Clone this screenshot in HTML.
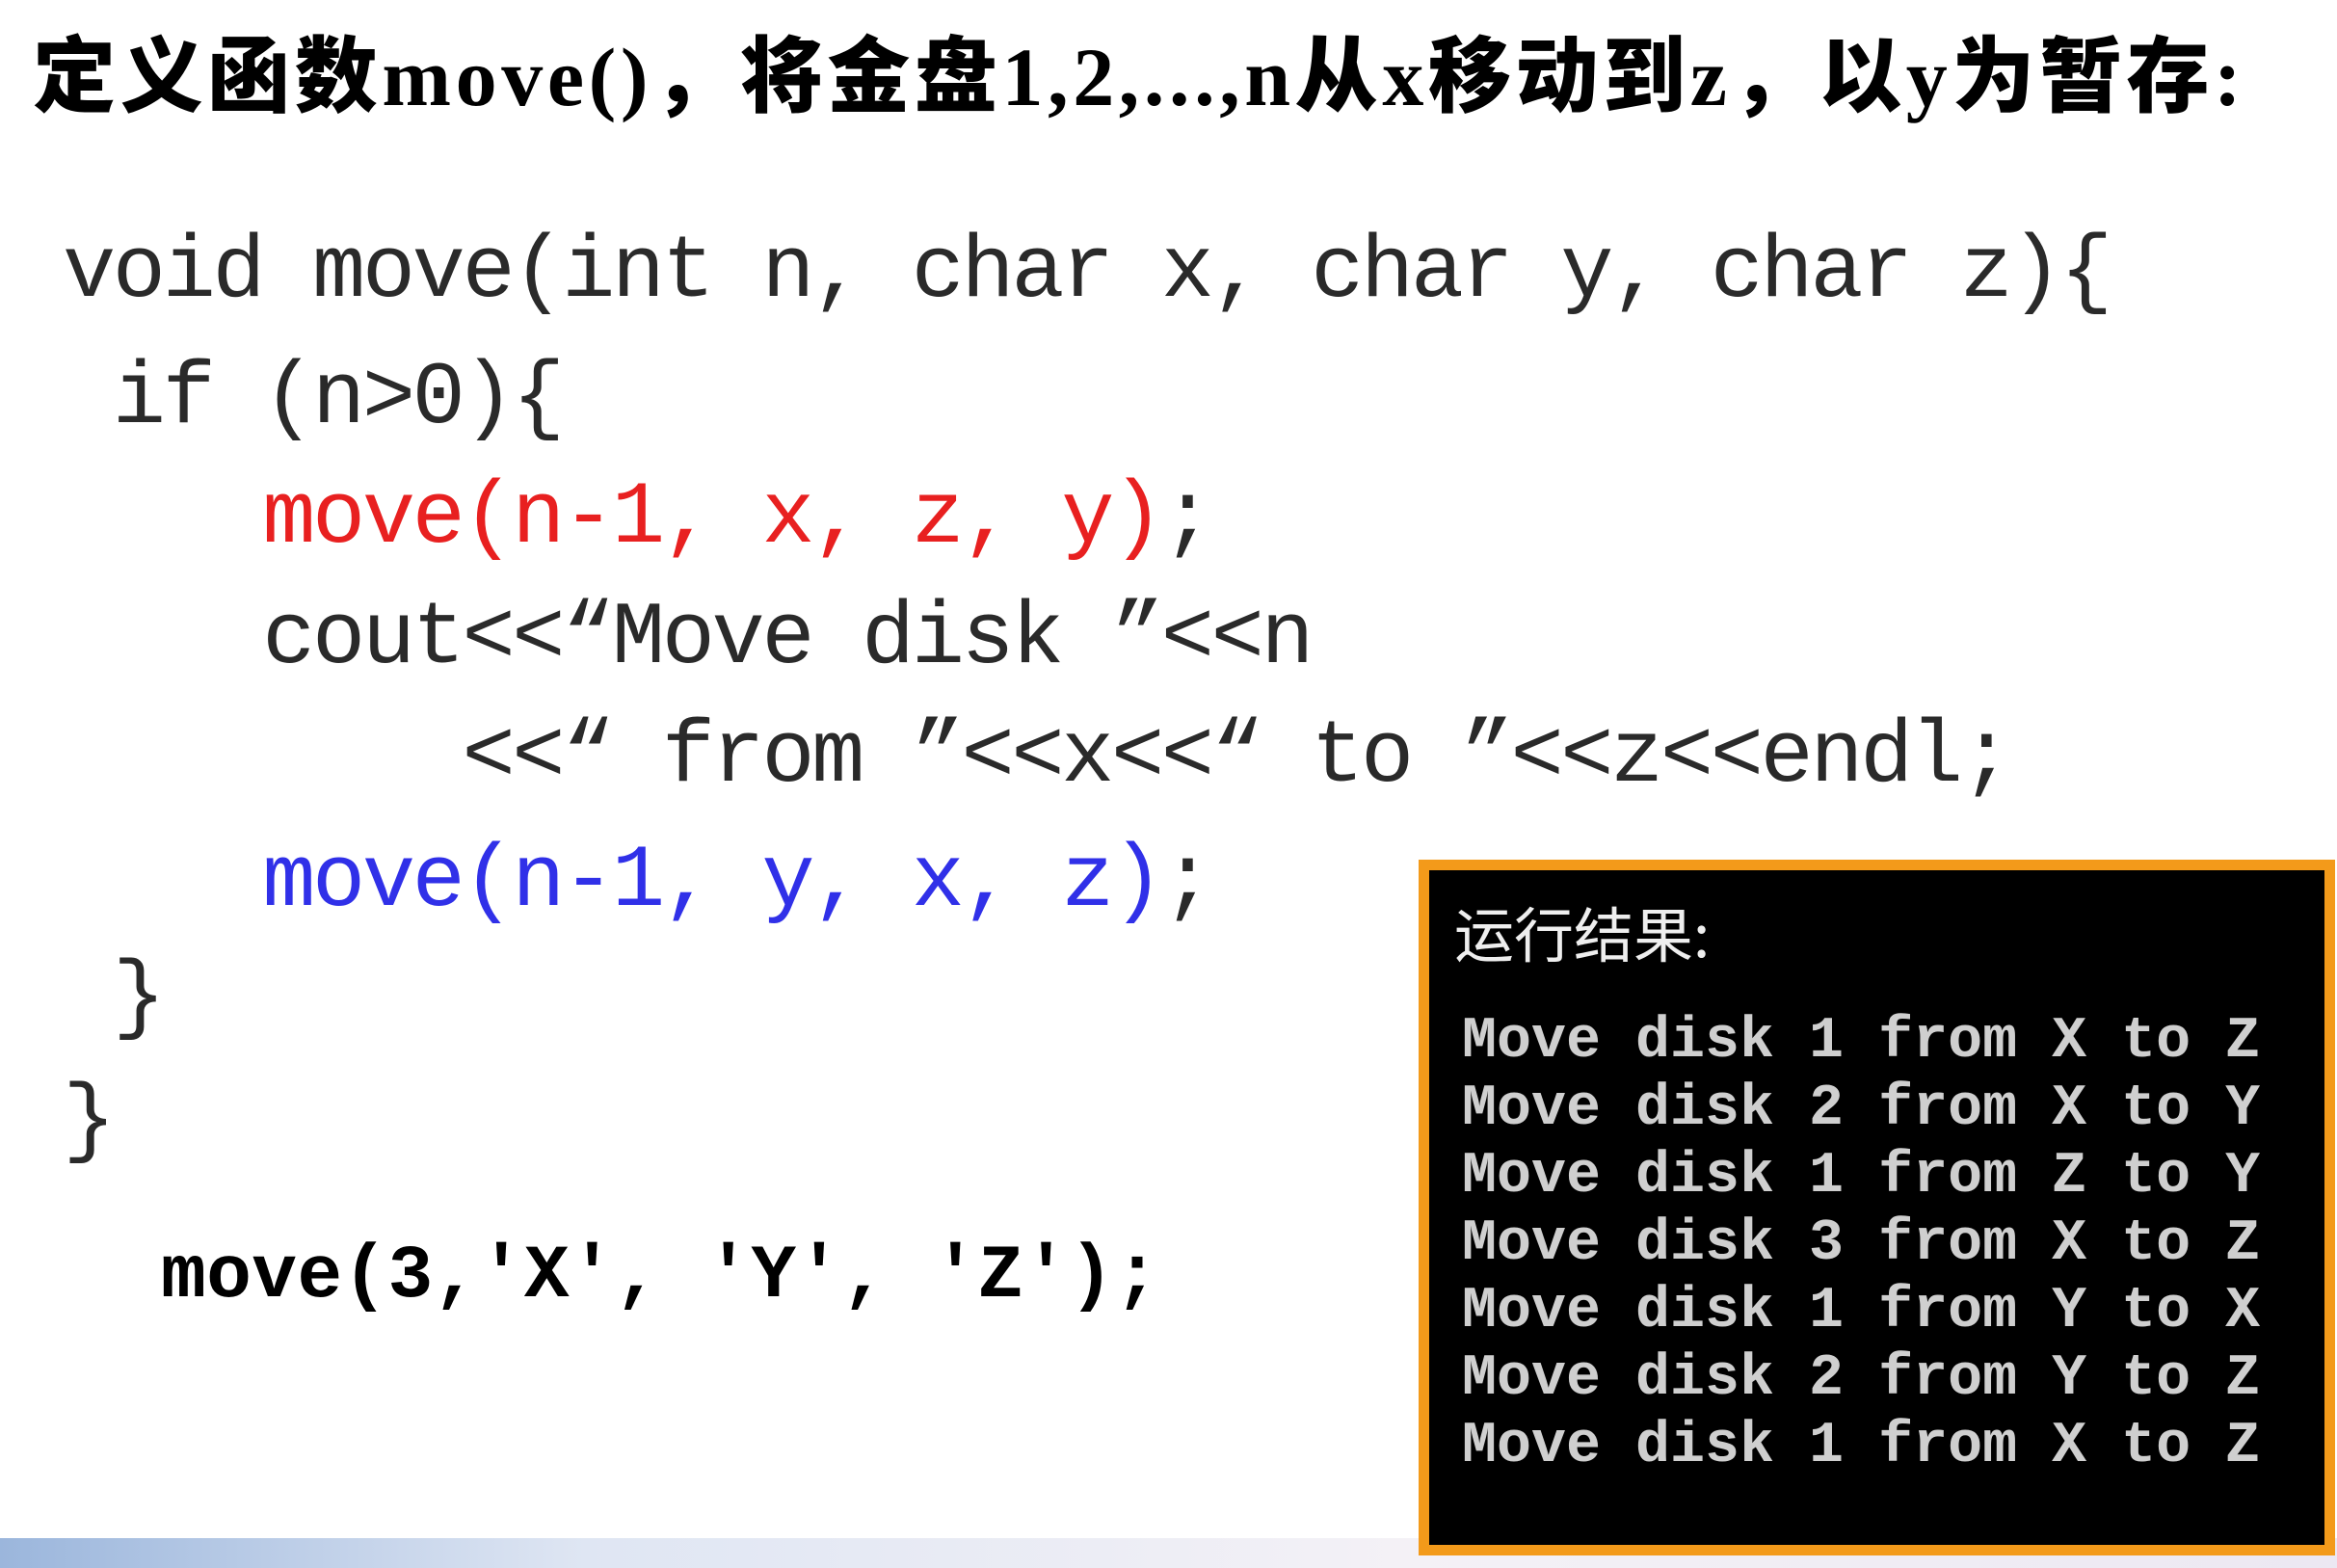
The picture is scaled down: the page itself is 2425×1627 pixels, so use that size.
<!DOCTYPE html>
<html><head><meta charset="utf-8"><style>
html,body{margin:0;padding:0;}
body{width:2425px;height:1627px;position:relative;overflow:hidden;background:#fff;}
.t{position:absolute;left:34px;top:22px;font-family:"Liberation Serif","Noto Sans CJK SC",serif;font-weight:bold;font-size:86px;line-height:100px;white-space:nowrap;color:#000;letter-spacing:4.6px;}
.t .c{font-family:"Noto Sans CJK SC",sans-serif;font-weight:900;}
.l{position:absolute;font-family:"Liberation Mono",monospace;font-size:92px;line-height:92px;letter-spacing:-3.4px;white-space:pre;color:#2a2a2a;left:65px;}
.r{color:#e82020;}.b{color:#3030e8;}
.bd{position:absolute;left:167px;top:1286px;font-family:"Liberation Mono",monospace;font-weight:bold;font-size:78px;line-height:78px;white-space:pre;color:#000;letter-spacing:0.3px;}
.term{position:absolute;left:1472px;top:892px;width:929px;height:700px;background:#000;border:11px solid #f39a1a;}
.th{position:absolute;left:26px;top:28px;font-family:"Noto Sans CJK SC",sans-serif;font-size:62px;line-height:70px;color:#eee;}
.tl{position:absolute;left:34px;font-family:"Liberation Mono",monospace;font-weight:bold;font-size:60px;line-height:70px;color:#cfcfcf;white-space:pre;}
.bot{position:absolute;left:0;top:1596px;width:2425px;height:31px;background:linear-gradient(90deg,#9bb6dc 0%,#dfe6f3 25%,#f4f1f6 60%,#ece8f2 100%);}
</style></head><body>
<div class="t"><span class="c">定义函数</span>move()<span class="c">，将金盘</span>1,2,...,n<span class="c">从</span>x<span class="c">移动到</span>z<span class="c">，以</span>y<span class="c">为暂存</span>:</div>
<div class="l" style="top:237px">void move(int n, char x, char y, char z){</div>
<div class="l" style="top:368px"> if (n&gt;0){</div>
<div class="l" style="top:492px">    <span class="r">move(n-1, x, z, y)</span>;</div>
<div class="l" style="top:617px">    cout&lt;&lt;“Move disk ”&lt;&lt;n</div>
<div class="l" style="top:740px">        &lt;&lt;“ from ”&lt;&lt;x&lt;&lt;“ to ”&lt;&lt;z&lt;&lt;endl;</div>
<div class="l" style="top:869px">    <span class="b">move(n-1, y, x, z)</span>;</div>
<div class="l" style="top:990px"> }</div>
<div class="l" style="top:1118px">}</div>
<div class="bd">move(3,'X', 'Y', 'Z');</div>
<div class="bot"></div>
<div class="term">
<div class="th">运行结果:</div>
<div class="tl" style="top:143px">Move disk 1 from X to Z</div>
<div class="tl" style="top:213px">Move disk 2 from X to Y</div>
<div class="tl" style="top:283px">Move disk 1 from Z to Y</div>
<div class="tl" style="top:353px">Move disk 3 from X to Z</div>
<div class="tl" style="top:423px">Move disk 1 from Y to X</div>
<div class="tl" style="top:493px">Move disk 2 from Y to Z</div>
<div class="tl" style="top:563px">Move disk 1 from X to Z</div>
</div>
</body></html>
